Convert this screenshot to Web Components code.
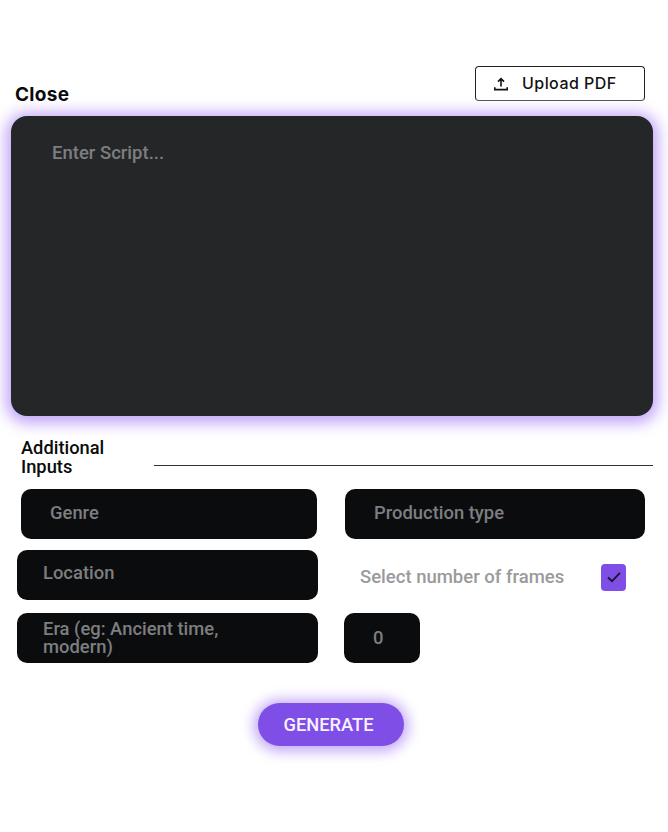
<!DOCTYPE html>
<html>
<head>
<meta charset="utf-8">
<title>Script</title>
<style>
  html, body { margin: 0; padding: 0; background: #fff; }
</style>
</head>
<body>
<script-form></script-form>

<script>
class UploadButton extends HTMLElement {
  constructor() {
    super();
    this.attachShadow({ mode: "open" }).innerHTML = `
    <style>
      :host {
        display: flex;
        align-items: center;
        box-sizing: border-box;
        width: 170px;
        height: 35px;
        padding-left: 16px;
        padding-bottom: 2px;
        background: #fff;
        border: 1px solid #222;
        border-bottom-color: #555;
        border-radius: 4px;
        font: 500 16px "Inter", "Liberation Sans", sans-serif;
        letter-spacing: 0.45px;
        color: #111;
      }
      svg { width: 18px; height: 18px; margin: 2px 12px 0 0; flex: none; }
    </style>
    <svg viewBox="0 0 18 18" fill="none" stroke="#111" stroke-width="1.6">
      <path d="M9 11.5V4M6 6.6 9 3.6l3 3"/>
      <path d="M2.8 12.2v2.4h12.4v-2.4"/>
    </svg>
    <slot></slot>`;
  }
}

class ScriptBox extends HTMLElement {
  constructor() {
    super();
    this.attachShadow({ mode: "open" }).innerHTML = `
    <style>
      :host {
        display: block;
        box-sizing: border-box;
        height: 300px;
        padding: 27px 41px;
        background: #242628;
        border-radius: 16px;
        box-shadow: 0 2px 15px 5px #c0a3f7;
        font: 500 18.5px/20px "Roboto", "Liberation Sans", sans-serif;
        color: #7d7e80;
      }
    </style>
    <slot></slot>`;
  }
}

class SectionTitle extends HTMLElement {
  constructor() {
    super();
    this.attachShadow({ mode: "open" }).innerHTML = `
    <style>
      :host {
        display: flex;
        align-items: flex-end;
        font: 500 18.3px/18.5px "Roboto", "Liberation Sans", sans-serif;
        color: #0b0b0b;
      }
      .label { width: 133px; flex: none; }
      .line { flex: 1; height: 1px; background: #333; margin-bottom: 10px; }
    </style>
    <div class="label"><slot></slot></div>
    <div class="line"></div>`;
  }
}

class TextField extends HTMLElement {
  constructor() {
    super();
    this.attachShadow({ mode: "open" }).innerHTML = `
    <style>
      :host {
        display: flex;
        align-items: center;
        box-sizing: border-box;
        height: 50px;
        padding-left: var(--inset, 26px);
        padding-bottom: var(--lift, 0);
        background: #0b0c0e;
        border-radius: 10px;
        font: 500 18.4px/18.5px "Roboto", "Liberation Sans", sans-serif;
        color: #7d7e80;
      }
    </style>
    <div><slot></slot></div>`;
  }
}

class FrameCheck extends HTMLElement {
  constructor() {
    super();
    this.attachShadow({ mode: "open" }).innerHTML = `
    <style>
      :host {
        display: flex;
        align-items: center;
        justify-content: space-between;
        box-sizing: border-box;
        font: 500 18.5px "Roboto", "Liberation Sans", sans-serif;
        color: #9a9a9c;
      }
      .box {
        display: flex;
        align-items: center;
        justify-content: center;
        width: 25px;
        height: 27px;
        background: #7f4ee6;
        border-radius: 4px;
      }
      svg { width: 16px; height: 16px; }
    </style>
    <slot></slot>
    <div class="box">
      <svg viewBox="0 0 16 16" fill="none" stroke="#1d1230" stroke-width="1.8">
        <path d="M2 8.5 6 12.2 14 3.8"/>
      </svg>
    </div>`;
  }
}

class GenerateButton extends HTMLElement {
  constructor() {
    super();
    this.attachShadow({ mode: "open" }).innerHTML = `
    <style>
      :host {
        display: flex;
        align-items: center;
        justify-content: center;
        box-sizing: border-box;
        width: 146px;
        height: 43px;
        padding-right: 5px;
        background: #7f4ee6;
        border-radius: 22px;
        box-shadow: 0 1px 14px 4px #c0a3f7;
        font: 500 18.3px "Roboto", "Liberation Sans", sans-serif;
        color: #f6f1ff;
      }
    </style>
    <slot></slot>`;
  }
}

class ScriptForm extends HTMLElement {
  constructor() {
    super();
    this.attachShadow({ mode: "open" }).innerHTML = `
    <style>
      :host {
        display: block;
        box-sizing: border-box;
        width: 668px;
        height: 832px;
        padding-top: 66px;
        background: #fff;
      }
      .top {
        display: flex;
        justify-content: space-between;
        align-items: flex-end;
        height: 40px;
        padding: 0 23px 0 15px;
      }
      .close {
        font: 700 19px/22px "Inter", "Liberation Sans", sans-serif;
        letter-spacing: 0.3px;
        color: #0a0a0a;
      }
      upload-button { align-self: flex-start; }
      script-box { margin: 10px 15px 0 11px; }
      section-title { margin: 23px 15px 0 21px; }
      .row { display: flex; height: 50px; }
      .r1 { margin-top: 13px; padding-left: 21px; }
      .r2 { margin-top: 11px; padding-left: 17px; }
      .r3 { margin-top: 13px; padding-left: 17px; }
      .r1 text-field { --lift: 2px; }
      .r1 text-field:first-child { width: 296px; margin-right: 28px; --inset: 29px; }
      .r1 text-field:last-child { width: 300px; --inset: 29px; }
      .r2 text-field { width: 301px; --inset: 26px; --lift: 3px; }
      .r3 text-field:first-child { width: 301px; --inset: 26px; }
      frame-check { width: 266px; margin-left: 42px; height: 54px; }
      .r3 text-field:last-child { width: 76px; margin-left: 26px; --inset: 29px; }
      .action { display: flex; justify-content: center; margin: 40px 6px 0 0; }
    </style>
    <div class="top">
      <div class="close">Close</div>
      <upload-button>Upload PDF</upload-button>
    </div>
    <script-box>Enter Script...</script-box>
    <section-title>Additional<br>Inputs</section-title>
    <div class="row r1">
      <text-field>Genre</text-field>
      <text-field>Production type</text-field>
    </div>
    <div class="row r2">
      <text-field>Location</text-field>
      <frame-check>Select number of frames</frame-check>
    </div>
    <div class="row r3">
      <text-field>Era (eg: Ancient time,<br>modern)</text-field>
      <text-field>0</text-field>
    </div>
    <div class="action"><generate-button>GENERATE</generate-button></div>`;
  }
}

customElements.define("upload-button", UploadButton);
customElements.define("script-box", ScriptBox);
customElements.define("section-title", SectionTitle);
customElements.define("text-field", TextField);
customElements.define("frame-check", FrameCheck);
customElements.define("generate-button", GenerateButton);
customElements.define("script-form", ScriptForm);
</script>
</body>
</html>
